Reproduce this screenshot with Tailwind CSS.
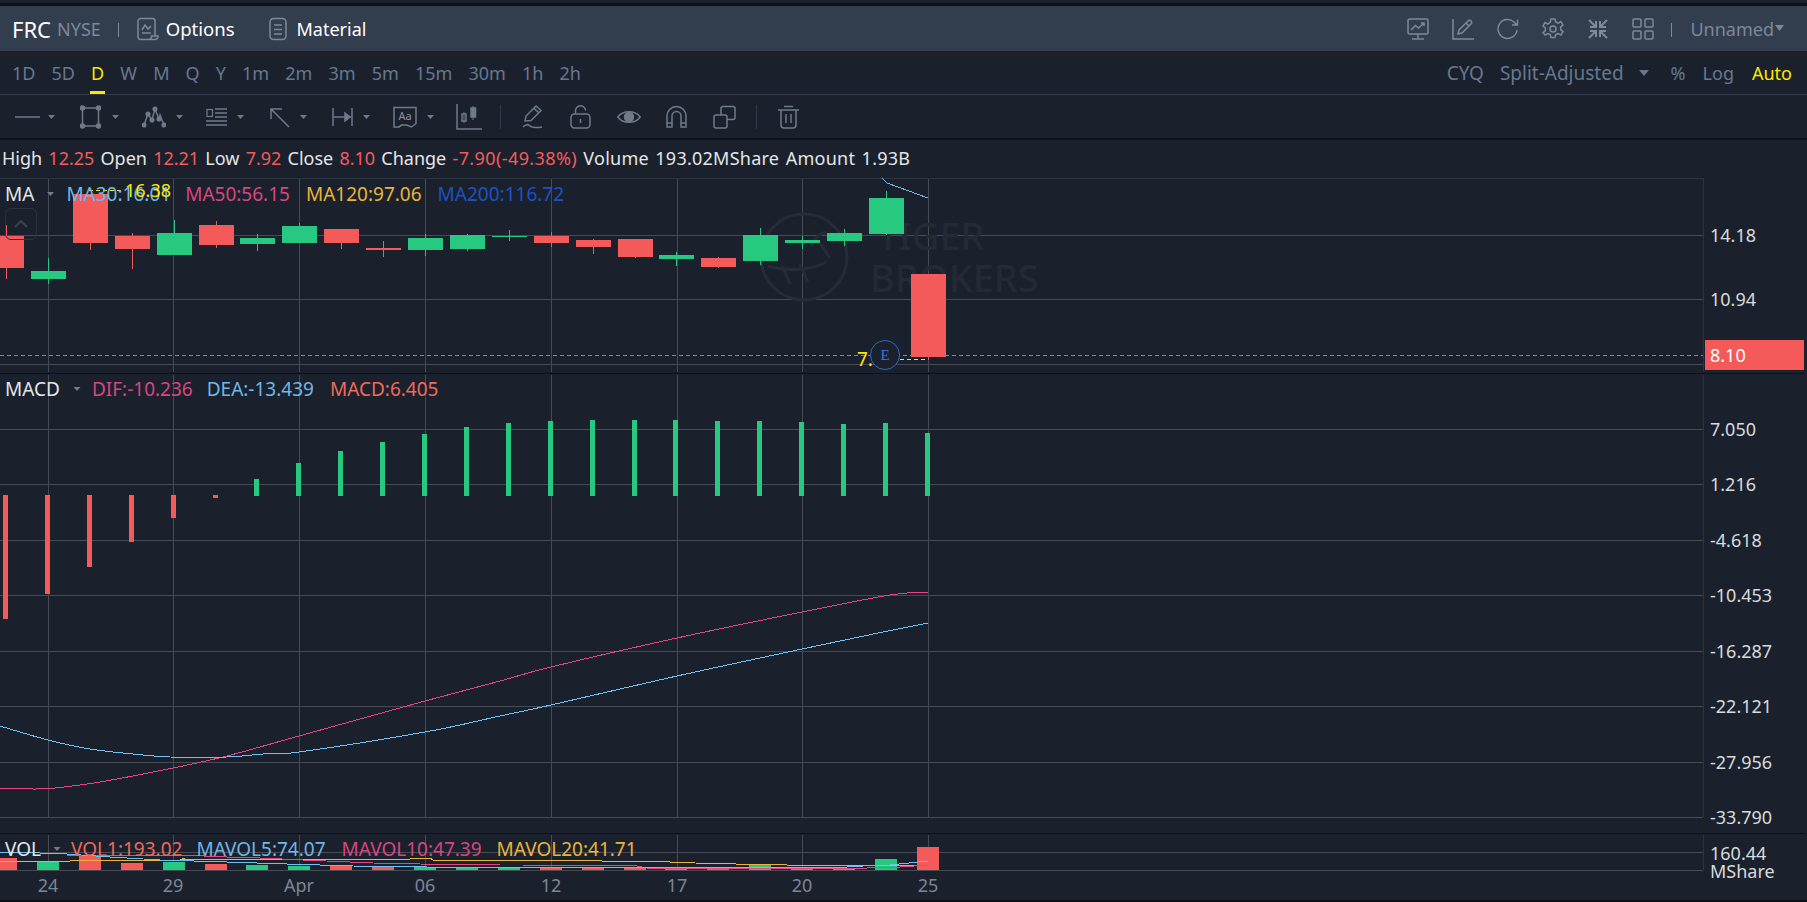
<!DOCTYPE html>
<html lang="en">
<head>
    <meta charset="UTF-8">
    <title>FRC NYSE</title>
    <script src="https://cdn.jsdelivr.net/npm/@tailwindcss/browser@4"></script>
</head>
<body class="bg-[#1a212c] w-[1807px] h-[902px] overflow-hidden flex flex-col font-['Noto_Sans','Liberation_Sans',sans-serif] text-[18px] leading-none text-[#e4e6e8]">

    <div class="h-[3px] shrink-0"></div>
    <div class="h-[3px] shrink-0 bg-[#0e1218]"></div>

    <!-- Header -->
    <header class="h-[45px] shrink-0 bg-[#323d4e] flex items-center justify-between">
        <div class="flex items-center">
            <span class="ml-[12px] text-[22px] text-white">FRC</span>
            <span class="ml-[6px] text-[#7d8899]">NYSE</span>
            <span class="ml-[17px] w-px h-[14px] mt-[3px] bg-[#7d8899]"></span>
            <svg class="ml-[18px] w-[22px] h-[24px]" viewBox="0 0 22 24" fill="none" stroke="#7d8899" stroke-width="1.5">
                <path d="M18 19V4a2.5 2.5 0 0 0-2.5-2.5H3.500A2.500 2.500 0 0 0 1 4v16a2.500 2.500 0 0 0 2.500 2.500H18a3 3 0 0 0 3-3.500h-6.500a3 3 0 0 1-3 3.500"/>
                <path d="M5 13l3-5 3 4 3-3M5 16h9"/>
            </svg>
            <span class="ml-[7px] pt-px text-[18.500px] text-white">Options</span>
            <svg class="ml-[34px] w-[18px] h-[24px]" viewBox="0 0 18 24" fill="none" stroke="#7d8899" stroke-width="1.5">
                <rect x="1" y="1.500" width="16" height="21" rx="3.500"/>
                <path d="M5 8h8M5 12.500h8M5 17h8"/>
            </svg>
            <span class="ml-[10px] text-white">Material</span>
        </div>
        <div class="flex items-center">
            <svg class="w-[22px] h-[22px]" viewBox="0 0 22 22" fill="none" stroke="#7d8899" stroke-width="1.500">
                <rect x="1" y="1" width="20" height="15" rx="1.500"/>
                <path d="M4 12l4.500-4.500 3 2.500L17 5M14 5h3v3M11 16v4M5 21h12"/>
            </svg>
            <svg class="ml-[23px] w-[22px] h-[22px]" viewBox="0 0 22 22" fill="none" stroke="#7d8899" stroke-width="1.500">
                <path d="M1 1v20h21"/>
                <path d="M6 16l1-4 9-9a1.500 1.500 0 0 1 3 3l-9 9zM14 5l3 3"/>
            </svg>
            <svg class="ml-[23px] w-[22px] h-[22px]" viewBox="0 0 22 22" fill="none" stroke="#7d8899" stroke-width="1.500">
                <path d="M20 12a9.500 9.500 0 1 1-3-8l3 3M20.500 1.500V7h-5.500"/>
            </svg>
            <svg class="ml-[23px] w-[22px] h-[22px]" viewBox="0 0 22 22" fill="none" stroke="#7d8899" stroke-width="1.500">
                <path d="M9 1h4l.7 3 2.500 1.100 2.700-1.500 2.100 3.400-2.400 2 .1 2.600 2.300 2-2.100 3.400-2.700-1.500-2.500 1.100-.7 3H9l-.7-3-2.500-1.100-2.700 1.500L1 14.600l2.300-2 .1-2.600-2.400-2 2.100-3.400 2.700 1.500L8.300 4z"/>
                <circle cx="11" cy="11" r="3"/>
            </svg>
            <svg class="ml-[23px] w-[22px] h-[22px]" viewBox="0 0 22 22" fill="none" stroke="#7d8899" stroke-width="2">
                <path d="M2 2l6.500 6.500M3 9h6V3M20 2l-6.500 6.500M19 9h-6V3M2 20l6.500-6.500M3 13h6v6M20 20l-6.500-6.500M19 13h-6v6"/>
            </svg>
            <svg class="ml-[23px] w-[22px] h-[22px]" viewBox="0 0 22 22" fill="none" stroke="#7d8899" stroke-width="1.500">
                <rect x="1" y="1" width="8" height="8" rx="1"/>
                <rect x="13" y="1" width="8" height="8" rx="1"/>
                <rect x="1" y="13" width="8" height="8" rx="1"/>
                <rect x="13" y="13" width="8" height="8" rx="1"/>
            </svg>
            <span class="ml-[17px] w-px h-[14px] mt-[3px] bg-[#7d8899]"></span>
            <span class="ml-[18px] text-[#7d8899]">Unnamed</span>
            <svg class="ml-px mr-[23px] w-[9px] h-[6px] mb-[2px]" viewBox="0 0 9 6" fill="#7d8899"><path d="M0 0h9L4.500 6z"/></svg>
        </div>
    </header>

    <!-- Periods -->
    <div class="h-[44px] shrink-0 border-b border-[#2f3846] flex items-center justify-between text-[#66788f]">
        <nav class="flex h-full items-center pl-[12px] gap-[16.100px]">
            <span>1D</span>
            <span>5D</span>
            <span class="relative h-full flex items-center text-[#ffe600]">D<span class="absolute bottom-0 -left-px -right-px h-[3px] bg-[#ffe600]"></span></span>
            <span>W</span>
            <span>M</span>
            <span>Q</span>
            <span>Y</span>
            <span>1m</span>
            <span>2m</span>
            <span>3m</span>
            <span>5m</span>
            <span>15m</span>
            <span>30m</span>
            <span>1h</span>
            <span>2h</span>
        </nav>
        <div class="flex items-center pr-[15px]">
            <span class="text-[19px] pt-px">CYQ</span>
            <span class="ml-[16px] text-[19px] pt-px">Split-Adjusted</span>
            <svg class="ml-[15px] w-[10px] h-[6px]" viewBox="0 0 10 6" fill="#66788f"><path d="M0 0h10L5 6z"/></svg>
            <span class="ml-[22px]">%</span>
            <span class="ml-[17px]">Log</span>
            <span class="ml-[18px] text-[#ffe600]">Auto</span>
        </div>
    </div>

    <!-- Drawing tools -->
    <div class="h-[43px] shrink-0 flex items-center pl-[15px]">
        <div class="w-[65px] flex items-center">
            <svg class="w-[25px] h-[24px]" viewBox="0 0 25 24" fill="none" stroke="#6f7a8a" stroke-width="1.500"><path d="M0 12h25"/></svg>
            <svg class="ml-[8px] w-[7px] h-[4px]" viewBox="0 0 7 4" fill="#6f7a8a"><path d="M0 0h7L3.500 4z"/></svg>
        </div>
        <div class="w-[62px] flex items-center">
            <svg class="w-[21px] h-[24px]" viewBox="0 0 21 24" fill="none" stroke="#6f7a8a" stroke-width="1.500"><rect x="2.500" y="3" width="16" height="18"/><g fill="#6f7a8a"><circle cx="2.500" cy="3" r="2"/><circle cx="18.500" cy="3" r="2"/><circle cx="2.500" cy="21" r="2"/><circle cx="18.500" cy="21" r="2"/></g></svg>
            <svg class="ml-[11px] w-[7px] h-[4px]" viewBox="0 0 7 4" fill="#6f7a8a"><path d="M0 0h7L3.500 4z"/></svg>
        </div>
        <div class="w-[64px] flex items-center">
            <svg class="w-[24px] h-[24px]" viewBox="0 0 24 24" fill="none" stroke="#6f7a8a" stroke-width="1.500"><path d="M2 20l4-11 4 6 3-11 4 10 1-4 4 10"/><g fill="#6f7a8a"><circle cx="2" cy="20" r="1.800"/><circle cx="6" cy="9" r="1.800"/><circle cx="10" cy="15" r="1.800"/><circle cx="13" cy="4" r="1.800"/><circle cx="17" cy="14" r="1.800"/><circle cx="22" cy="20" r="1.800"/></g></svg>
            <svg class="ml-[10px] w-[7px] h-[4px]" viewBox="0 0 7 4" fill="#6f7a8a"><path d="M0 0h7L3.500 4z"/></svg>
        </div>
        <div class="w-[64px] flex items-center">
            <svg class="w-[21px] h-[24px]" viewBox="0 0 21 24" fill="none" stroke="#6f7a8a" stroke-width="1.500"><path d="M9 4h12M9 8h12M9 12h12M0 16h21M0 20h21"/><rect x="1" y="4.500" width="5.500" height="7" stroke-width="1.200"/></svg>
            <svg class="ml-[10px] w-[7px] h-[4px]" viewBox="0 0 7 4" fill="#6f7a8a"><path d="M0 0h7L3.500 4z"/></svg>
        </div>
        <div class="w-[62px] flex items-center">
            <svg class="w-[21px] h-[24px]" viewBox="0 0 21 24" fill="none" stroke="#6f7a8a" stroke-width="1.500"><path d="M1 4l18 18M1 14V4h11"/></svg>
            <svg class="ml-[9px] w-[7px] h-[4px]" viewBox="0 0 7 4" fill="#6f7a8a"><path d="M0 0h7L3.500 4z"/></svg>
        </div>
        <div class="w-[61px] flex items-center">
            <svg class="w-[21px] h-[24px]" viewBox="0 0 21 24" fill="none" stroke="#6f7a8a" stroke-width="1.500"><path d="M1 3v18M20 3v18M1 12h18"/><path d="M13 8l5 4-5 4z" fill="#6f7a8a"/></svg>
            <svg class="ml-[10px] w-[7px] h-[4px]" viewBox="0 0 7 4" fill="#6f7a8a"><path d="M0 0h7L3.500 4z"/></svg>
        </div>
        <div class="w-[63px] flex items-center">
            <div class="relative w-[24px] h-[22px]">
                <svg class="w-[24px] h-[22px]" viewBox="0 0 24 22" fill="none" stroke="#6f7a8a" stroke-width="1.500"><path d="M5.500 21l-4.500-0.100V1.500h22V17.500L18.500 21l-5-2H9zM9 18.500l-3.500 3"/></svg>
                <span class="absolute inset-0 flex items-center justify-center text-[11px] text-[#8a94a3] pb-[3px]">Aa</span>
            </div>
            <svg class="ml-[10px] w-[7px] h-[4px]" viewBox="0 0 7 4" fill="#6f7a8a"><path d="M0 0h7L3.500 4z"/></svg>
        </div>
        <svg class="w-[26px] h-[26px]" viewBox="0 0 26 26" fill="none" stroke="#6f7a8a" stroke-width="1.500"><path d="M1 0v25h25"/><path d="M8 8v11M17 2v14" stroke-width="1"/><rect x="6" y="10" width="4" height="7" fill="none"/><rect x="15" y="4" width="4.500" height="9" fill="#6f7a8a"/></svg>
        <span class="ml-[18px] w-px h-[24px] bg-[#2f3846]"></span>
        <svg class="ml-[21px] w-[21px] h-[24px]" viewBox="0 0 21 24" fill="none" stroke="#6f7a8a" stroke-width="1.500"><path d="M3 16l1-5L14 1l5 4.500L9 15.500zM12 3.500l5 4.500M1 22c3-3 5-3 7-1s5 2 12 1"/></svg>
        <svg class="ml-[27px] w-[21px] h-[24px]" viewBox="0 0 21 24" fill="none" stroke="#6f7a8a" stroke-width="1.500"><rect x="1" y="9" width="19" height="14" rx="3.500"/><path d="M5.500 9V6a5 5 0 0 1 10-.5M10.500 14v4"/></svg>
        <svg class="ml-[26px] w-[24px] h-[24px]" viewBox="0 0 24 24" fill="none" stroke="#6f7a8a" stroke-width="1.500"><path d="M.8 12C6 5 18 5 23.200 12C18 19 6 19 .8 12z"/><circle cx="12" cy="12" r="4.500" fill="#6f7a8a"/></svg>
        <svg class="ml-[25px] w-[21px] h-[24px]" viewBox="0 0 21 24" fill="none" stroke="#6f7a8a" stroke-width="1.500"><path d="M1 22V11a9.500 9.500 0 0 1 19 0v11h-5V11a4.500 4.500 0 0 0-9 0v11zM1 18h5M15 18h5"/></svg>
        <svg class="ml-[26px] w-[23px] h-[24px]" viewBox="0 0 23 24" fill="none" stroke="#6f7a8a" stroke-width="1.500"><rect x="8" y="1.500" width="14" height="13" rx="2"/><rect x="1" y="10" width="13" height="13" rx="2" fill="#1a212c"/></svg>
        <span class="ml-[20px] w-px h-[24px] bg-[#2f3846]"></span>
        <svg class="ml-[21px] w-[21px] h-[24px]" viewBox="0 0 21 24" fill="none" stroke="#6f7a8a" stroke-width="1.500"><path d="M6 1.500h9M0 5h21M3 5v15a3 3 0 0 0 3 3h9a3 3 0 0 0 3-3V5M8 9v9M13 9v9"/></svg>
    </div>

    <div class="h-[2px] shrink-0 bg-[#0e1218]"></div>

    <!-- Quote -->
    <div class="h-[38px] shrink-0 leading-[36px] pl-[2px] whitespace-pre [word-spacing:1.500px]">High <span class="text-[#f45b5b]">12.25</span> Open <span class="text-[#f45b5b]">12.21</span> Low <span class="text-[#f45b5b]">7.92</span> Close <span class="text-[#f45b5b]">8.10</span> Change <span class="text-[#f45b5b] tracking-[0.400px]">-7.90(-49.38%)</span> <span class="tracking-[0.250px]">Volume 193.02MShare Amount 1.93B</span></div>

    <!-- Chart -->
    <main class="relative h-[724px] shrink-0">
        <svg id="chart" class="absolute inset-0" width="1807" height="724" viewBox="0 178 1807 724" fill="none"></svg>

        <section class="relative h-[195px]">
            <div class="flex items-center h-[32px] pl-[5px] text-[19px]">
                <span>MA</span>
                <svg class="ml-[13px] w-[7px] h-[4px]" viewBox="0 0 7 4" fill="#6f7a8a"><path d="M0 0h7L3.500 4z"/></svg>
                <span class="ml-[12px] text-[#6fb7e8]">MA30:16.01</span>
                <span class="ml-[14px] text-[#d8467f]">MA50:56.15</span>
                <span class="ml-[16px] text-[#e8b53a]">MA120:97.06</span>
                <span class="ml-[16px] text-[#1a52c4]">MA200:116.72</span>
            </div>
            <span class="absolute left-[125px] top-[3px] text-[#ffe600]">16.38</span>
            <div class="absolute left-[5px] top-[30px] w-[32px] h-[32px] rounded-md border border-[#2c333e] flex items-center justify-center">
                <svg class="w-[14px] h-[8px]" viewBox="0 0 14 8" fill="none" stroke="#3a424e" stroke-width="2"><path d="M1 7l6-6 6 6"/></svg>
            </div>
            <span class="absolute left-[857px] top-[172px] text-[19px] text-[#ffe600]">7.</span>
            <div class="absolute left-[870px] top-[162px] w-[30px] h-[30px] rounded-full border border-[#3566c8] bg-[#1a212c] flex items-center justify-center font-['Liberation_Serif',serif] text-[15px] text-[#3f74dc]">E</div>
            <div class="absolute left-[1705px] top-[162px] w-[99px] h-[30px] bg-[#f55a5a] flex items-center pl-[5px] text-white">8.10</div>
            <div id="axis-main"></div>
        </section>

        <section class="relative h-[459px] mt-px">
            <div class="flex items-center h-[30px] pl-[5px] text-[19px]">
                <span>MACD</span>
                <svg class="ml-[13px] w-[8px] h-[4px]" viewBox="0 0 7 4" fill="#6f7a8a"><path d="M0 0h7L3.500 4z"/></svg>
                <span class="ml-[11px] text-[#d8467f]">DIF:-10.236</span>
                <span class="ml-[14px] text-[#6fb7e8]">DEA:-13.439</span>
                <span class="ml-[16px] text-[#ef6a5a]">MACD:6.405</span>
            </div>
            <div id="axis-macd"></div>
        </section>

        <section class="relative h-[68px] mt-px">
            <div class="flex items-center h-[30px] pl-[5px] text-[19px]">
                <span>VOL</span>
                <svg class="ml-[12px] w-[8px] h-[4px]" viewBox="0 0 7 4" fill="#6f7a8a"><path d="M0 0h7L3.500 4z"/></svg>
                <span class="ml-[10px] text-[#ef6a5a]">VOL1:193.02</span>
                <span class="ml-[14px] text-[#6fb7e8]">MAVOL5:74.07</span>
                <span class="ml-[16px] text-[#d8467f]">MAVOL10:47.39</span>
                <span class="ml-[15px] text-[#e8b53a]">MAVOL20:41.71</span>
            </div>
            <div id="axis-vol"></div>
            <div id="dates"></div>
        </section>
    </main>

    <script>
        const RED = '#f55a5a';
        const GREEN = '#26c97f';
        const GRID = '#464b53';
        const EDGE = '#2c3440';

        // body top, body bottom, wick top, wick bottom, red?
        const candles = [
            [236, 268, 225, 279, 1], [271, 279, 258, 284, 0], [194, 243, 194, 250, 1], [236, 249, 233, 269, 1],
            [233, 255, 220, 255, 0], [225, 245, 221, 248, 1], [238, 244, 234, 251, 0], [226, 243, 223, 243, 0],
            [229, 243, 229, 249, 1], [248, 250, 241, 257, 1], [238, 250, 234, 256, 0], [235, 249, 234, 251, 0],
            [236, 237, 230, 241, 0], [236, 243, 232, 247, 1], [240, 247, 239, 254, 1], [239, 257, 239, 258, 1],
            [255, 259, 252, 266, 0], [258, 267, 257, 268, 1], [235, 261, 228, 265, 0], [240, 243, 236, 249, 0],
            [233, 241, 229, 246, 0], [198, 234, 191, 235, 0], [274, 357, 274, 360, 1]
        ];
        const macdRed = [619, 594, 567, 542, 518, 498];
        const macdGreen = [479, 463, 451, 442, 434, 427, 423, 421, 420, 420, 420, 421, 421, 422, 424, 423, 433];
        const volTops = [858, 862, 856, 863, 862, 864, 865, 866, 866, 866, 867, 867, 868, 868, 868, 867, 868, 868, 865, 868, 868, 859, 847];
        const volRed = [1, 0, 1, 1, 0, 1, 0, 0, 1, 1, 0, 0, 0, 1, 1, 1, 0, 1, 0, 0, 0, 0, 1];

        const vx = [48, 173, 299, 425, 551, 677, 802, 928];
        const mainY = [235, 299, 364];
        const macdY = [429, 484, 540, 595, 651, 706, 762, 817];
        const volY = [852, 870];

        function rect(x, y, w, h, fill) {
            return `<rect x="${Math.round(x)}" y="${y}" width="${w}" height="${h}" fill="${fill}"/>`;
        }
        function line(points, color) {
            return `<polyline points="${points}" stroke="${color}" stroke-width="1" fill="none"/>`;
        }
        // Catmull-Rom through the points, so the MACD curves don't kink
        function curve(pts, color) {
            let d = `M${pts[0][0]} ${pts[0][1]}`;
            for (let i = 0; i < pts.length - 1; i++) {
                const p0 = pts[Math.max(i - 1, 0)], p1 = pts[i], p2 = pts[i + 1], p3 = pts[Math.min(i + 2, pts.length - 1)];
                const c1 = [p1[0] + (p2[0] - p0[0]) / 6, p1[1] + (p2[1] - p0[1]) / 6];
                const c2 = [p2[0] - (p3[0] - p1[0]) / 6, p2[1] - (p3[1] - p1[1]) / 6];
                d += `C${c1[0]} ${c1[1]} ${c2[0]} ${c2[1]} ${p2[0]} ${p2[1]}`;
            }
            return `<path d="${d}" stroke="${color}" stroke-width="1" fill="none"/>`;
        }

        let out = '<g shape-rendering="crispEdges">';

        // Grid
        [[178, 372], [375, 817], [835, 870]].forEach(([a, b]) => {
            vx.forEach(x => { out += rect(x, a, 1, b - a, GRID); });
            out += rect(1703, a, 1, b - a, EDGE);
        });
        out += rect(0, 178, 1703, 1, EDGE);
        [...mainY, ...macdY, ...volY].forEach(y => { out += rect(0, y, 1703, 1, GRID); });
        out += rect(0, 373, 1805, 1, '#0e1218');
        out += rect(0, 833, 1805, 1, '#0e1218');
        out += rect(0, 900, 1807, 2, '#0e1218');
        out += `<line x1="0" y1="355.500" x2="1703" y2="355.500" stroke="${RED}" stroke-dasharray="4 3"/>`;

        out += '</g>';

        // Watermark
        out += `<g stroke="#252c37" stroke-width="3"><circle cx="804" cy="257" r="43"/><path d="M768 266c20 6 44 4 58-4M782 266l8 18M800 264l8 18M818 240l12 18M826 232c-8 2-12 8-14 14" fill="none"/></g>
            <text x="877" y="250" font-family="Noto Sans" font-size="38" font-weight="500" fill="#232a35">TIGER</text>
            <text x="870" y="292" font-family="Noto Sans" font-size="38" font-weight="500" fill="#232a35">BROKERS</text>`;

        out += '<g shape-rendering="crispEdges">';

        // Candles
        candles.forEach(([top, bottom, wickTop, wickBottom, isRed], i) => {
            const left = -11 + 41.9 * i;
            const color = isRed ? RED : GREEN;
            out += rect(left + 17, wickTop, 1, wickBottom - wickTop, color);
            out += rect(left, top, 35, bottom - top, color);
        });

        // MACD bars
        macdRed.forEach((y, i) => { out += rect(3 + 41.9 * i, 495, 5, y - 495, RED); });
        macdGreen.forEach((y, i) => { out += rect(3 + 41.9 * (i + 6), y, 5, 496 - y, GREEN); });

        // Volume bars
        volTops.forEach((y, i) => { out += rect(-5 + 41.9 * i, y, 22, 870 - y, volRed[i] ? RED : GREEN); });

        // MA line
        out += line('882,178 887,183 928,198', '#6fb7e8');

        // DIF / DEA
        out += curve([[0, 788], [33, 789], [55, 788], [100, 782], [173, 768], [227, 756], [299, 736], [425, 701], [500, 681], [551, 667], [677, 638], [802, 612], [890, 595], [928, 592]], '#e8457f');
        out += curve([[0, 726], [48, 740], [90, 749], [133, 754], [170, 757], [227, 757], [263, 754], [299, 752], [425, 732], [500, 716], [551, 705], [677, 676], [802, 649], [883, 632], [928, 623]], '#6fc0f5');

        // Volume averages
        out += line('0,861 70,861 72,860 180,860 182,859 400,860 410,859 430,858 433,860 522,860 600,860 602,861 645,861 695,863 736,864 785,864 787,865 928,865', '#e8b53a');
        out += line('67,855 180,855 227,857 260,858 303,860 373,863 420,864 500,865 523,865 637,866 647,868 867,868 900,867 928,865', '#e8457f');
        out += line('0,852 40,853 67,854 110,857 160,860 227,862 287,864 353,866 427,867 500,868 523,867 637,867 847,867 863,866 890,865 928,861', '#6fc0f5');

        // 16.38 and earnings markers
        out += '</g>';
        out += `<line x1="89" y1="190.500" x2="122" y2="190.500" stroke="#ffe600" stroke-dasharray="4 3"/>`;
        out += `<line x1="900" y1="359.500" x2="928" y2="359.500" stroke="#ffe600" stroke-dasharray="4 3"/>`;

        document.getElementById('chart').innerHTML = out;

        // Axis labels, y is a page coordinate
        function axis(id, offset, labels) {
            document.getElementById(id).innerHTML = labels.map(([text, y]) =>
                `<span class="absolute left-[1710px] -translate-y-1/2 text-[#d8dadc]" style="top:${y - offset}px">${text}</span>`
            ).join('');
        }
        axis('axis-main', 178, [['14.18', 235], ['10.94', 299]]);
        axis('axis-macd', 374, [['7.050', 429], ['1.216', 484], ['-4.618', 540], ['-10.453', 595], ['-16.287', 651], ['-22.121', 706], ['-27.956', 762], ['-33.790', 817]]);
        axis('axis-vol', 834, [['160.44', 853], ['MShare', 871]]);

        document.getElementById('dates').innerHTML = [['24', 48], ['29', 173], ['Apr', 299], ['06', 425], ['12', 551], ['17', 677], ['20', 802], ['25', 928]].map(([text, x]) =>
            `<span class="absolute top-[51px] -translate-y-1/2 -translate-x-1/2 text-[#7d8694]" style="left:${x}px">${text}</span>`
        ).join('');
    </script>
</body>
</html>
